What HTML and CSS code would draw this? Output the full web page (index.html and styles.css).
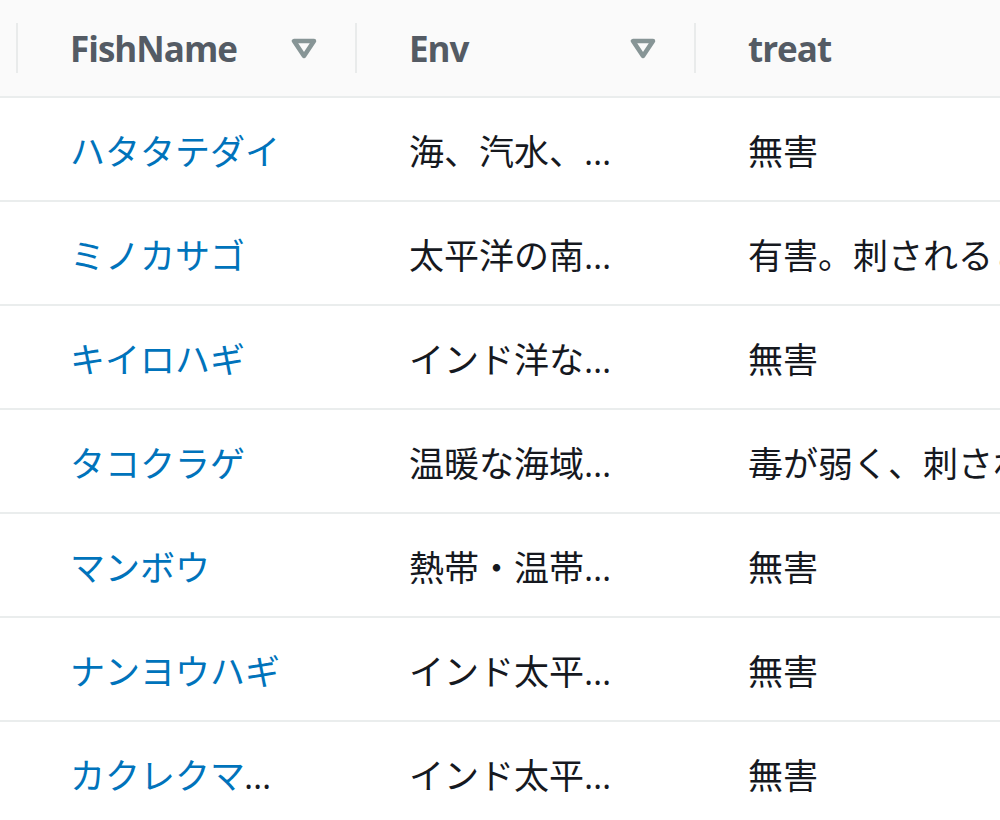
FILE: index.html
```html
<!DOCTYPE html>
<html lang="ja">
<head>
<meta charset="utf-8">
<title>Fish table</title>
<link rel="stylesheet" href="styles.css">
</head>
<body>
<div class="table">
  <div class="row head">
    <div class="lead"></div>
    <div class="th">
      <span class="label">FishName</span>
      <svg class="sort" viewBox="0 0 26 21" width="26" height="21"><polygon points="3,3 23,3 13,18"/></svg>
    </div>
    <div class="th">
      <span class="label">Env</span>
      <svg class="sort" viewBox="0 0 26 21" width="26" height="21"><polygon points="3,3 23,3 13,18"/></svg>
    </div>
    <div class="th">
      <span class="label">treat</span>
    </div>
  </div>

  <div class="row">
    <div class="lead"></div>
    <div class="td"><span class="txt"><a class="link" href="#">ハタタテダイ</a></span></div>
    <div class="td"><span class="txt">海、汽水、淡水</span></div>
    <div class="td wide"><span class="txt">無害</span></div>
  </div>
  <div class="row">
    <div class="lead"></div>
    <div class="td"><span class="txt"><a class="link" href="#">ミノカサゴ</a></span></div>
    <div class="td"><span class="txt">太平洋の南西部</span></div>
    <div class="td wide"><span class="txt">有害。刺されると激しい痛み</span></div>
  </div>
  <div class="row">
    <div class="lead"></div>
    <div class="td"><span class="txt"><a class="link" href="#">キイロハギ</a></span></div>
    <div class="td"><span class="txt">インド洋などのサンゴ礁</span></div>
    <div class="td wide"><span class="txt">無害</span></div>
  </div>
  <div class="row">
    <div class="lead"></div>
    <div class="td"><span class="txt"><a class="link" href="#">タコクラゲ</a></span></div>
    <div class="td"><span class="txt">温暖な海域の表層</span></div>
    <div class="td wide"><span class="txt">毒が弱く、刺されても軽い痛み</span></div>
  </div>
  <div class="row">
    <div class="lead"></div>
    <div class="td"><span class="txt"><a class="link" href="#">マンボウ</a></span></div>
    <div class="td"><span class="txt">熱帯・温帯の外洋</span></div>
    <div class="td wide"><span class="txt">無害</span></div>
  </div>
  <div class="row">
    <div class="lead"></div>
    <div class="td"><span class="txt"><a class="link" href="#">ナンヨウハギ</a></span></div>
    <div class="td"><span class="txt">インド太平洋のサンゴ礁</span></div>
    <div class="td wide"><span class="txt">無害</span></div>
  </div>
  <div class="row">
    <div class="lead"></div>
    <div class="td"><span class="txt"><a class="link" href="#">カクレクマノミ</a></span></div>
    <div class="td"><span class="txt">インド太平洋のサンゴ礁</span></div>
    <div class="td wide"><span class="txt">無害</span></div>
  </div>
</div>
</body>
</html>
```
FILE: styles.css
```css
html, body {
  margin: 0;
  padding: 0;
  background: #ffffff;
  overflow: hidden;
}

body {
  font-family: "Open Sans", "Noto Sans CJK JP", sans-serif;
  font-size: 35px;
  font-weight: 400;
  color: #16191f;
}

.table {
  width: 1000px;
}

.row {
  display: grid;
  grid-template-columns: 16px 339px 339px 306px;
  height: 104px;
  box-sizing: border-box;
  border-bottom: 2px solid #eaeded;
}

.row.head {
  height: 98px;
  background: #fafafa;
}

.th {
  display: flex;
  align-items: center;
  padding-right: 38px;
  font-weight: 700;
  letter-spacing: -1px;
  color: #545b64;
  min-width: 0;
}

.th::before {
  content: "";
  flex: none;
  width: 2px;
  height: 50px;
  background: #e9ebeb;
  margin-right: 52px;
}

.th .label {
  flex: 1;
  white-space: nowrap;
}

.sort {
  flex: none;
  fill: none;
  stroke: #879596;
  stroke-width: 4.5;
  stroke-linejoin: round;
}

.td {
  display: flex;
  align-items: center;
  padding: 0 59px 0 54px;
  min-width: 0;
}

.td.wide {
  padding-right: 0;
}

.txt {
  display: block;
  min-width: 0;
  white-space: nowrap;
  overflow: hidden;
  text-overflow: ellipsis;
}

.td.wide .txt {
  overflow: visible;
  text-overflow: clip;
}

.link {
  color: #0073bb;
  text-decoration: none;
}
```
